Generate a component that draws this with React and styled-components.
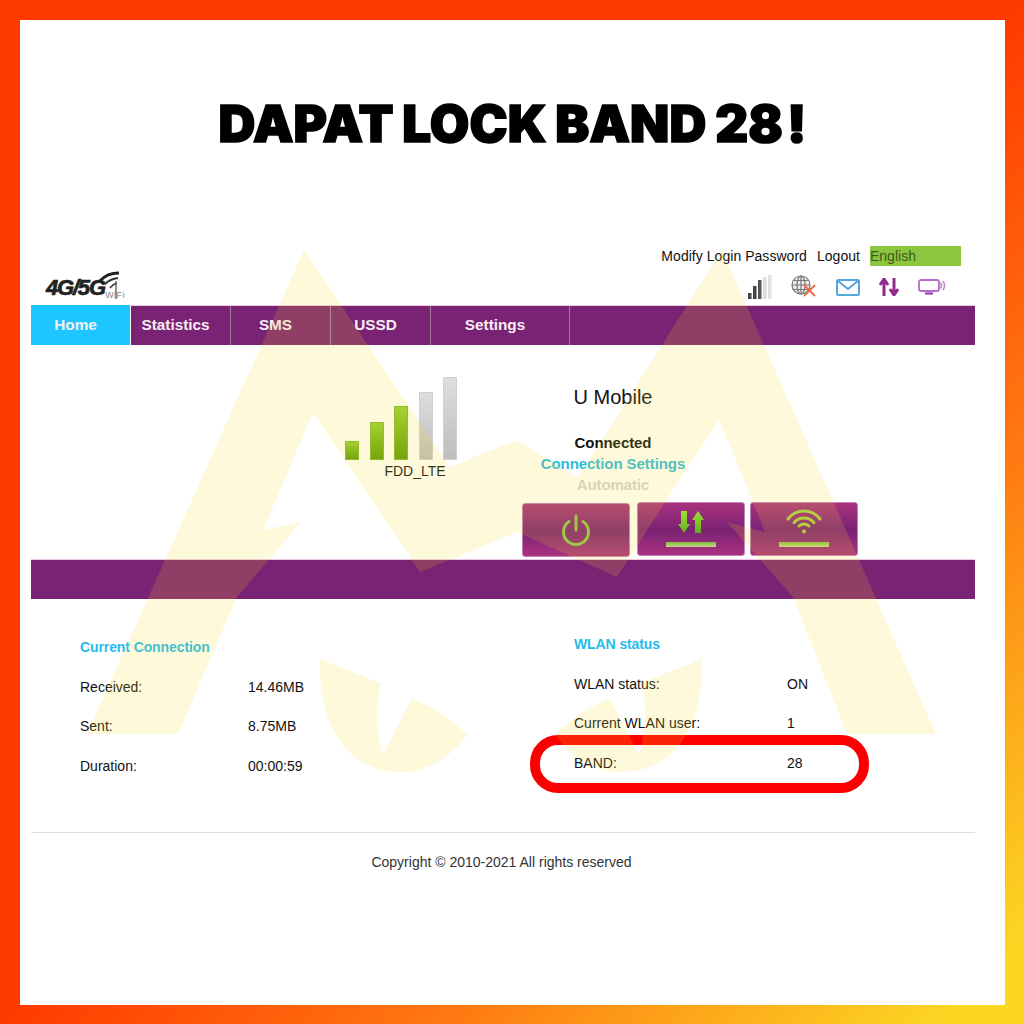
import React from 'react';
import styled, { createGlobalStyle } from 'styled-components';

const GlobalStyle = createGlobalStyle`
  html, body {
    margin: 0;
    padding: 0;
    background: #fff;
  }
`;

const connectionRows = [
  ['Received:', '14.46MB'],
  ['Sent:', '8.75MB'],
  ['Duration:', '00:00:59'],
];

const wlanRows = [
  ['WLAN status:', 'ON'],
  ['Current WLAN user:', '1'],
];

const signalBars = [
  { height: 19, on: true },
  { height: 38, on: true },
  { height: 54, on: true },
  { height: 68, on: false },
  { height: 83, on: false },
];

const tabs = ['Home', 'Statistics', 'SMS', 'USSD', 'Settings'];

const App = () => (
  <Frame>
    <GlobalStyle />
    <Sheet>
      <Title>
        DAPAT LOCK BAND 28<Bang>!</Bang>
      </Title>
      <Page>
        <TopLinks>
          <TopLink>Modify Login Password</TopLink>
          <TopLink>Logout</TopLink>
          <Language>English</Language>
        </TopLinks>

        <Masthead>
          <Logo>
            <LogoText>4G/5G</LogoText>
            <LogoWifi>
              <svg width="24" height="29" viewBox="0 0 24 29">
                <path d="M1 11 Q8 3 20 3" fill="none" stroke="#222" strokeWidth="3" />
                <path d="M6 14 Q11 9 19 8" fill="none" stroke="#333" strokeWidth="2.2" />
                <path d="M11 18 Q14 14 18 13" fill="none" stroke="#444" strokeWidth="1.6" />
                <path d="M17 11 V29" stroke="#555" strokeWidth="1.3" />
              </svg>
              <LogoWifiText>WiFi</LogoWifiText>
            </LogoWifi>
          </Logo>
          <StatusIcons>
            <svg width="24" height="24" viewBox="0 0 24 24">
              <rect x="0" y="18" width="3.5" height="6" fill="#444" />
              <rect x="5" y="11" width="3.5" height="13" fill="#444" />
              <rect x="10" y="5" width="3.5" height="19" fill="#555" />
              <rect x="15" y="2" width="3.5" height="22" fill="#ddd" />
              <rect x="20" y="0" width="3.5" height="24" fill="#e2e2e2" />
            </svg>
            <svg width="26" height="24" viewBox="0 0 26 24">
              <g fill="none" stroke="#777" strokeWidth="1.2">
                <circle cx="10" cy="10" r="9" fill="#eee" />
                <ellipse cx="10" cy="10" rx="4" ry="9" />
                <path d="M1 10 H19 M2.5 5.5 H17.5 M2.5 14.5 H17.5 M10 1 V19" />
              </g>
              <path d="M13 10 L24 21 M24 10 L13 21" stroke="#ee6a4a" strokeWidth="1.8" />
            </svg>
            <svg width="24" height="17" viewBox="0 0 24 17">
              <rect x="1" y="1" width="22" height="15" rx="1" fill="#fff" stroke="#54a8dc" strokeWidth="2" />
              <path d="M2 2 L12 10 L22 2" fill="none" stroke="#54a8dc" strokeWidth="2" />
            </svg>
            <svg width="20" height="18" viewBox="0 0 20 18">
              <path d="M5 18 V4 M1 7 L5 1 L9 7" fill="none" stroke="#8e2a8c" strokeWidth="3" />
              <path d="M15 0 V14 M11 11 L15 17 L19 11" fill="none" stroke="#8e2a8c" strokeWidth="3" />
            </svg>
            <svg width="28" height="16" viewBox="0 0 28 16">
              <rect x="1" y="1" width="20" height="11" rx="2" fill="none" stroke="#b56ccb" strokeWidth="1.8" />
              <path d="M7 14.5 H15" stroke="#8e3fa8" strokeWidth="2.2" />
              <path d="M22.5 3.5 Q24.5 6.5 22.5 9.5 M25 2 Q28 6.5 25 11" fill="none" stroke="#bd88d2" strokeWidth="1.6" />
            </svg>
          </StatusIcons>
        </Masthead>

        <Nav>
          {tabs.map((tab, i) => (
            <Tab key={tab} $active={i === 0} $wide={tab === 'Settings'}>
              {tab}
            </Tab>
          ))}
        </Nav>

        <Hero>
          <Signal>
            <Bars>
              {signalBars.map((bar, i) => (
                <Bar key={i} $on={bar.on} style={{ height: bar.height }} />
              ))}
            </Bars>
            <NetworkType>FDD_LTE</NetworkType>
          </Signal>
          <Panel>
            <StatusText>
              <Carrier>U Mobile</Carrier>
              <StatusLine $first>Connected</StatusLine>
              <StatusLine $color="#2fbcdc">Connection Settings</StatusLine>
              <StatusLine $color="#d2d2d2">Automatic</StatusLine>
            </StatusText>
            <Actions>
              <ActionButton $offset={1}>
                <svg width="30" height="34" viewBox="0 0 30 34">
                  <path
                    d="M8 7.6 A12.5 12.5 0 1 0 22 7.6"
                    fill="none"
                    stroke="#8fc24a"
                    strokeWidth="3"
                    strokeLinecap="round"
                  />
                  <path d="M15 2 V16" stroke="#8fc24a" strokeWidth="3" strokeLinecap="round" />
                </svg>
              </ActionButton>
              <ActionButton>
                <svg width="26" height="23" viewBox="0 0 26 23">
                  <defs>
                    <linearGradient id="arrowGreen" x1="0" y1="0" x2="0" y2="1">
                      <stop offset="0" stopColor="#a4dc3c" />
                      <stop offset="1" stopColor="#62ad18" />
                    </linearGradient>
                  </defs>
                  <path d="M3 0 H9 V13 H12 L6 22 L0 13 H3 Z" fill="url(#arrowGreen)" />
                  <path d="M17 22 H23 V9 H26 L20 0 L14 9 H17 Z" fill="url(#arrowGreen)" />
                </svg>
                <ActionBar />
              </ActionButton>
              <ActionButton>
                <svg width="36" height="26" viewBox="0 0 36 26">
                  <g fill="none" stroke="#a6cf45" strokeWidth="3" strokeLinecap="round">
                    <path d="M2 11 A20 20 0 0 1 34 11" />
                    <path d="M8 14.7 A13 13 0 0 1 28 14.7" />
                    <path d="M13 18 A7 7 0 0 1 23 18" />
                  </g>
                  <circle cx="18" cy="23.5" r="2" fill="#a6cf45" />
                </svg>
                <ActionBar />
              </ActionButton>
            </Actions>
          </Panel>
        </Hero>

        <Divider />

        <Info>
          <InfoColumn $offset={3} $fixed>
            <InfoHeading>Current Connection</InfoHeading>
            {connectionRows.map(([label, value]) => (
              <InfoRow key={label} $labelWidth={168}>
                <span>{label}</span>
                <span>{value}</span>
              </InfoRow>
            ))}
          </InfoColumn>
          <InfoColumn>
            <InfoHeading>WLAN status</InfoHeading>
            {wlanRows.map(([label, value]) => (
              <InfoRow key={label} $labelWidth={213}>
                <span>{label}</span>
                <span>{value}</span>
              </InfoRow>
            ))}
            <BandRow $labelWidth={213}>
              <span>BAND:</span>
              <span>28</span>
            </BandRow>
          </InfoColumn>
        </Info>

        <Footer>Copyright © 2010-2021 All rights reserved</Footer>
      </Page>
    </Sheet>

    <Watermark viewBox="0 0 1024 1024">
      <path d="M304 250 L450 467 L516 440 L578 478 L722 250 L936 734 L847 734 L793 597 L727 522 L765 532 L719 419 L617 577 L517 532 L420 572 L313 413 L263 530 L301 522 L237 597 L178 734 L87 734 Z" />
      <path d="M320 659 L381 683 Q375 710 378 727 Q379 745 383 755 L412 698 Q445 712 467 735 Q440 772 400 772 C350 772 318 730 320 659 Z" />
      <path d="M702 659 L641 683 Q647 710 644 727 Q643 745 639 755 L610 698 Q577 712 555 735 Q582 772 622 772 C672 772 704 730 702 659 Z" />
    </Watermark>
  </Frame>
);

// Styled components
const Frame = styled.div`
  position: relative;
  box-sizing: border-box;
  width: 1024px;
  height: 1024px;
  padding: 20px 19px 19px 20px;
  background: linear-gradient(135deg, #ff3a00 0%, #ff3a00 50%, #ff7a12 72%, #fbd723 96%);
  font-family: 'Liberation Sans', Arial, sans-serif;
  font-size: 14px;
  color: #111;
  overflow: hidden;
`;

const Sheet = styled.div`
  height: 100%;
  background: #fff;
  overflow: hidden;
`;

const Title = styled.h1`
  margin: 0;
  padding-top: 69px;
  height: 69px;
  line-height: 70px;
  text-align: center;
  font-family: Inter, 'Liberation Sans', sans-serif;
  font-weight: 900;
  font-size: 51px;
  letter-spacing: 0.1px;
  word-spacing: -1.5px;
  color: #000;
  -webkit-text-stroke: 1.6px #000;
`;

const Bang = styled.span`
  margin-left: 4px;
`;

const Page = styled.div`
  margin: 88px 30px 0 11px;
`;

const TopLinks = styled.div`
  display: flex;
  justify-content: flex-end;
  align-items: center;
  height: 20px;
  padding-right: 14px;
`;

const TopLink = styled.span`
  margin-right: 10px;
  letter-spacing: 0.04px;
`;

const Language = styled.span`
  width: 91px;
  height: 20px;
  line-height: 20px;
  background: #8cc63f;
  color: #3b5a1c;
`;

const Masthead = styled.div`
  display: flex;
  justify-content: space-between;
  height: 40px;
`;

const Logo = styled.div`
  display: flex;
  align-items: flex-end;
  padding: 0 0 7px 15px;
`;

const LogoText = styled.span`
  font-weight: 700;
  font-style: italic;
  font-size: 22px;
  line-height: 22px;
  letter-spacing: -1.2px;
  color: #222;
  -webkit-text-stroke: 0.7px #222;
`;

const LogoWifi = styled.div`
  display: flex;
  flex-direction: column;
  margin-left: -6px;
  width: 26px;

  svg {
    display: block;
    margin-bottom: -8px;
  }
`;

const LogoWifiText = styled.span`
  align-self: flex-end;
  font-size: 9px;
  line-height: 8px;
  letter-spacing: 0.4px;
  color: #888;
`;

const StatusIcons = styled.div`
  display: flex;
  align-items: center;
  gap: 19px;
  padding: 2px 29px 0 0;

  svg {
    display: block;
  }
`;

const Nav = styled.nav`
  display: flex;
  height: 39px;
  background: #7a2273;
  border-top: 1px solid #e8c8e4;
  margin-top: -1px;
`;

const Tab = styled.div`
  box-sizing: border-box;
  width: ${(p) => (p.$wide ? 139 : 100)}px;
  height: ${(p) => (p.$active ? 40 : 39)}px;
  padding-right: 10px;
  line-height: ${(p) => (p.$active ? 40 : 38)}px;
  text-align: center;
  font-weight: 700;
  font-size: 15.3px;
  color: #f6eef5;
  background: ${(p) => (p.$active ? '#1ec6ff' : 'transparent')};
  border-right: 1px solid ${(p) => (p.$active ? '#fff' : '#a878a2')};
  margin-top: ${(p) => (p.$active ? '-1px' : '0')};
`;

const Hero = styled.section`
  display: flex;
  align-items: flex-start;
  height: 214px;
`;

const Signal = styled.div`
  width: 112px;
  margin-left: 314px;
  padding-top: 32px;
`;

const Bars = styled.div`
  display: flex;
  justify-content: space-between;
  align-items: flex-end;
  height: 83px;
`;

const Bar = styled.div`
  box-sizing: border-box;
  width: 14px;
  background: ${(p) =>
    p.$on
      ? 'linear-gradient(#97cf35, #5a9c08)'
      : 'linear-gradient(#dedede, #bdbdbd)'};
  border: 1px solid ${(p) => (p.$on ? '#7cb82c' : '#d0d0d0')};
`;

const NetworkType = styled.div`
  padding-left: 28px;
  margin-top: 1px;
  line-height: 20px;
  text-align: center;
`;

const Panel = styled.div`
  margin-left: 65px;
  padding-top: 40px;
`;

const StatusText = styled.div`
  width: 182px;
  text-align: center;
`;

const Carrier = styled.div`
  font-size: 20px;
  line-height: 24px;
  color: #111;
`;

const StatusLine = styled.div`
  margin-top: ${(p) => (p.$first ? '22.5px' : '0')};
  line-height: 21px;
  font-size: 15px;
  font-weight: 700;
  letter-spacing: -0.07px;
  color: ${(p) => p.$color || '#111'};
`;

const Actions = styled.div`
  display: flex;
  align-items: flex-start;
  margin-top: 7.5px;
  gap: 7px;

  & > *:last-child {
    margin-left: -2px;
  }
`;

const ActionButton = styled.div`
  box-sizing: border-box;
  display: flex;
  flex-direction: column;
  align-items: center;
  justify-content: flex-end;
  gap: 8px;
  width: 108px;
  height: 54px;
  padding-bottom: 8px;
  margin-top: ${(p) => p.$offset || 0}px;
  background: linear-gradient(#aa327f, #7a2273 52%, #aa327f);
  border: 1px solid #c080b8;
  border-radius: 3px;

  svg {
    display: block;
  }
`;

const ActionBar = styled.span`
  display: block;
  width: 50px;
  height: 5px;
  background: linear-gradient(#86bd3c, #c0d98c);
`;

const Divider = styled.div`
  height: 40px;
  background: #7a2273;
  border-top: 1px solid #e8c8e4;
  box-sizing: border-box;
`;

const Info = styled.section`
  display: flex;
  align-items: flex-start;
  padding: 26px 0 0 49px;
  height: 207px;
`;

const InfoColumn = styled.div`
  margin-top: ${(p) => p.$offset || 0}px;
  flex: ${(p) => (p.$fixed ? '0 0 494px' : '1')};
`;

const InfoHeading = styled.div`
  line-height: 39.5px;
  font-weight: 700;
  letter-spacing: -0.1px;
  color: #1fbcec;
`;

const InfoRow = styled.div`
  position: relative;
  display: grid;
  grid-template-columns: ${(p) => p.$labelWidth}px 1fr;
  line-height: 39.5px;
`;

const BandRow = styled(InfoRow)`
  &::after {
    content: '';
    position: absolute;
    left: -44.5px;
    top: -8.5px;
    box-sizing: border-box;
    width: 339px;
    height: 58px;
    border: 10px solid #fa0000;
    border-radius: 28px;
  }
`;

const Footer = styled.footer`
  border-top: 1px solid #dcdcdc;
  padding-top: 19px;
  padding-right: 3px;
  line-height: 20px;
  text-align: center;
  color: #333;
`;

const Watermark = styled.svg`
  position: absolute;
  inset: 0;
  width: 1024px;
  height: 1024px;
  pointer-events: none;

  path {
    fill: rgba(253, 218, 40, 0.16);
  }
`;

export default App;
